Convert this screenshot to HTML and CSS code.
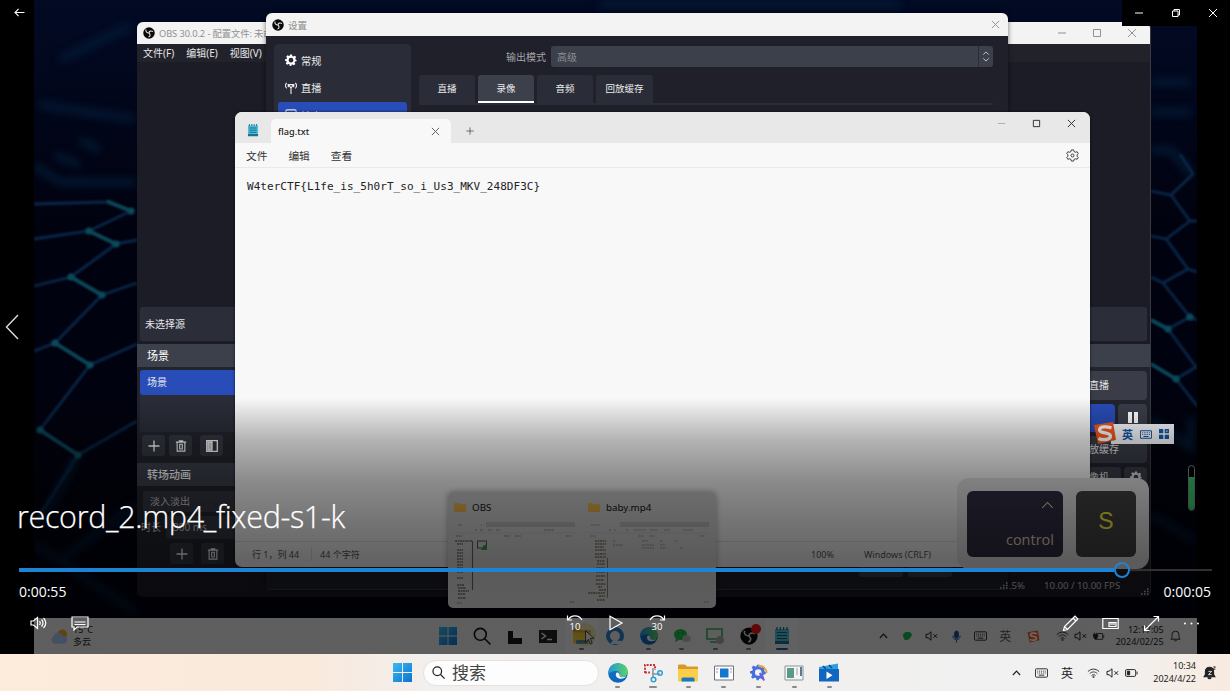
FILE: index.html
```html
<!DOCTYPE html>
<html lang="zh-CN">
<head>
<meta charset="utf-8">
<title>record_2.mp4_fixed-s1-k</title>
<link rel="stylesheet" href="styles.css">
</head>
<body>
<svg class="defs" width="0" height="0">
  <defs>
    <linearGradient id="edgeA" x1="0" y1="0" x2="1" y2="1"><stop offset="0" stop-color="#1273c4"/><stop offset="1" stop-color="#0f5fb8"/></linearGradient>
    <linearGradient id="edgeB" x1="0" y1="0" x2="1" y2="0"><stop offset="0" stop-color="#2296e0"/><stop offset="1" stop-color="#5bd45e"/></linearGradient>
    <linearGradient id="winG" x1="0" y1="0" x2="1" y2="1"><stop offset="0" stop-color="#3fb9ee"/><stop offset="1" stop-color="#0a73d2"/></linearGradient>
    <symbol id="i-x" viewBox="0 0 10 10"><path d="M1 1l8 8M9 1l-8 8"/></symbol>
    <symbol id="i-min" viewBox="0 0 10 10"><path d="M1 5h8"/></symbol>
    <symbol id="i-max" viewBox="0 0 10 10"><path d="M1.500 1.500h7v7h-7z"/></symbol>
    <symbol id="i-restore" viewBox="0 0 10 10"><path d="M1.500 3h5.500v5.500h-5.500zM3 3V1.500h5.500V7H7"/></symbol>
    <symbol id="i-plus" viewBox="0 0 12 12"><path d="M6 0.500v11M0.500 6h11"/></symbol>
    <symbol id="i-trash" viewBox="0 0 14 14"><path d="M1 2.500h12M5 2.500V1h4v1.500M2.500 3v10h9V3M5.500 5v5.500h3V5z"/></symbol>
    <symbol id="i-gear" viewBox="0 0 24 24"><path fill-rule="evenodd" d="M10 1h4l.7 3.200 2 .9 2.900-1.800 2.700 2.900-1.800 2.800.8 2L23 12v2.500l-3 .6-.9 2 1.600 2.900-2.800 2.700-2.800-1.800-2 .8L12.500 24h-3L9 20.700l-2-.9-2.800 1.800-2.700-2.800 1.800-2.800-.8-2L0 13.500v-3l3.300-.7.9-2L2.400 5l2.700-2.700L8 4.100l1.500-.7zM12 7.500a4.800 4.800 0 1 0 0 9.600 4.800 4.800 0 0 0 0-9.600z"/></symbol>
    <symbol id="i-obs" viewBox="0 0 24 24"><circle cx="12" cy="12" r="11.500" fill="#090909"/><g fill="none" stroke="#ddd" stroke-width="2.200"><path d="M6 5c-1 5 2 7 6 7"/><path d="M20 9c-4-2-8-1-8 3"/><path d="M11 20c4-1 4-5 1-8"/></g></symbol>
    <symbol id="i-note" viewBox="0 0 16 18"><path d="M1 2h14v12H1z" fill="#4cc0dd"/><path d="M1 14h14v3H1z" fill="#1e6f93"/><path d="M3 5.500h10M3 8.500h10M3 11.500h10" stroke="#12617e" stroke-width="1.200"/><path d="M3 0v3M6.300 0v3M9.600 0v3M13 0v3" stroke="#175f80" stroke-width="1.200"/></symbol>
    <symbol id="i-win" viewBox="0 0 20 20"><path fill="url(#winG)" d="M0 0h9.500v9.500H0zM10.500 0H20v9.500h-9.500zM0 10.500h9.500V20H0zM10.500 10.500H20V20h-9.500z"/></symbol>
    <symbol id="i-search" viewBox="0 0 16 16"><circle cx="6.500" cy="6.500" r="5.300"/><path d="M10.500 10.500l5 5"/></symbol>
    <symbol id="i-edge" viewBox="0 0 20 20"><circle cx="10" cy="10" r="9.800" fill="url(#edgeA)"/><path d="M.4 9C1 3.500 5 .2 10 .2c6 0 9.800 4 9.800 8.500 0 4-3 5.500-6 5.300-2.500-.2-2.600-1.200-2.200-2 .8-1.800-.8-4-4-4C4.500 8 1.500 9 .4 12z" fill="url(#edgeB)"/><path d="M11.600 12c-.6 1.200.6 2.200 2.800 2.200 1.800 0 3-.4 4-1.200-1 2-3 2.700-5.500 2.700-3.500 0-5.600-2.400-5-5 .5-2 3.600-1.700 3.700 1.300z" fill="#f3f7fa"/></symbol>
    <symbol id="i-folder" viewBox="0 0 20 18"><path d="M0 2c0-1 .5-1.500 1.500-1.500H7l2 2h10c.6 0 1 .4 1 1V6H0z" fill="#d9982a"/><path d="M0 5h20v11.500c0 .6-.4 1-1 1H1c-.6 0-1-.4-1-1z" fill="#fbce4a"/><path d="M3.500 17.500V15c0-1 .8-1.500 1.500-1.500h10c.8 0 1.500.6 1.500 1.500v2.500z" fill="#1678c7"/></symbol>
    <symbol id="i-foldersm" viewBox="0 0 12 10"><path d="M0 1h4.500l1 1.200H12V10H0z" fill="#e9b64a"/></symbol>
    <symbol id="i-up" viewBox="0 0 10 6"><path d="M1 5.200L5 1l4 4.200"/></symbol>
    <symbol id="i-kbd" viewBox="0 0 14 10"><rect x=".5" y=".5" width="13" height="9" rx="1"/><path d="M2.500 3h9M2.500 5h9" stroke-dasharray="1 1"/><path d="M4 7.300h6"/></symbol>
    <symbol id="i-wifi" viewBox="0 0 14 11"><path d="M.8 4C4.500.3 9.500.3 13.200 4M2.800 6.200c2.500-2.500 5.900-2.500 8.400 0M4.800 8.300c1.300-1.300 3.100-1.300 4.400 0"/><circle cx="7" cy="9.800" r=".8"/></symbol>
    <symbol id="i-mute" viewBox="0 0 13 10"><path d="M1 3.300h2L6 .8v8.400L3 6.700H1zM8.500 3.200l3.600 3.600M12.100 3.200L8.500 6.800"/></symbol>
    <symbol id="i-batt" viewBox="0 0 14 9"><rect x=".5" y=".8" width="11" height="7.400" rx="1.500"/><path d="M13 3v3"/><path d="M2.500 2.500h2.500v4H2.500z" fill="currentColor"/></symbol>
    <symbol id="i-bell" viewBox="0 0 12 13"><path d="M1 10h10L9.800 8V5a3.800 3.800 0 0 0-7.600 0v3zM4.500 10.500c.3 1.800 2.700 1.800 3 0"/></symbol>
    <symbol id="i-sogou" viewBox="0 0 24 24"><path d="M1 4l19-3 3 18-18 4z" fill="#f4571f"/><path d="M18.500 7c-5-2-12-1.500-12 2 0 4 11 1.500 11 6 0 4-8 4.500-12 2.500" fill="none" stroke="#fff" stroke-width="3.300"/></symbol>
    <symbol id="i-sig" viewBox="0 0 8 8"><path d="M0 7h1.500M3 7h1.500M3 4.500h1.500M6 7h1.500M6 4.500h1.500M6 2h1.500" stroke-width="1.500"/></symbol>
  </defs>
</svg>

<main class="screen">
  <section class="video">
    <svg class="wallpaper" viewBox="0 0 1163 654">
      <g transform="translate(-34 0)" fill="none">
        <g class="haze"><path d="M34 165l26 17h76M55 155l25 10M80 140l20 10M40 105l95 14M60 60l70-34M1151 82h40M1151 112h40M1151 150h20l20 24M600 5h300"/><path d="M78 455L40 525M34 545l26 15 77-55M60 560l75 52M1151 420l40 28v-30M1151 515l44 26"/></g>
        <g class="net"><path d="M34 204l72-2 25 9-42 20-55 8M89 231l27 13 21-4M116 244l-45 33-37 9M71 277l31 18 35-12M102 295l-47 48-21 8M55 343l35 22 47-21M90 365l-50 65 38 25 59-34M78 455l-43 68"/><path d="M1151 191l20 4 22-21-13-20M1171 195l19 26h7M1190 221l-24 18-15-3M1166 239l22 30 9 3M1188 269l-25 14-12-6M1163 283l27 34 7 3M1190 317l-22 12-17-9M1168 329l28 38-20 12-25-15M1176 379l22 28"/></g>
        <g class="teal"><path d="M107 201l24 10M89 231l27 13M71 277l31 18M55 343l35 22M40 430l38 25M1151 320l17 9M1151 364l25 15"/><g class="dots"><circle cx="131" cy="211" r="2"/><circle cx="89" cy="231" r="2"/><circle cx="116" cy="244" r="2"/><circle cx="71" cy="277" r="2"/><circle cx="102" cy="295" r="2"/><circle cx="55" cy="343" r="2"/><circle cx="90" cy="365" r="2"/><circle cx="40" cy="430" r="2"/><circle cx="78" cy="455" r="2"/><circle cx="1168" cy="329" r="2"/><circle cx="1176" cy="379" r="2"/><circle cx="1190" cy="317" r="2"/></g></g>
      </g>
    </svg>
  </section>

  <section class="obs">
    <header class="obs-title"><svg class="ic12"><use href="#i-obs"/></svg><span>OBS 30.0.2 - 配置文件: 未命</span>
      <div class="winbtns"><svg><use href="#i-min"/></svg><svg><use href="#i-max"/></svg><svg><use href="#i-x"/></svg></div></header>
    <nav class="obs-menu"><span>文件(F)</span><span>编辑(E)</span><span>视图(V)</span></nav>
    <div class="preview"></div>
    <div class="source">未选择源</div>
    <div class="docks">
      <div class="dock-left">
        <h3>场景</h3>
        <div class="list"><div class="row">场景</div></div>
        <div class="tools"><b><svg><use href="#i-plus"/></svg></b><b><svg><use href="#i-trash"/></svg></b><b class="gap"><svg viewBox="0 0 12 12"><path d="M.7.7h10.600v10.600H.7z"/><path d="M2 2h4v8H2z" fill="#ccc"/></svg></b></div>
        <h3 class="h-trans">转场动画</h3>
        <div class="combo">淡入淡出</div>
        <div class="dur"><span>时长</span><i>300 ms</i></div>
        <div class="tools low"><b><svg><use href="#i-plus"/></svg></b><b><svg><use href="#i-trash"/></svg></b></div>
      </div>
      <div class="dock-right">
        <h3></h3>
        <div class="btn b1">直播</div>
        <div class="pair"><div class="btn blue"></div><div class="btn pause"><i></i><i></i></div></div>
        <div class="btn b3">放缓存</div>
        <div class="pair"><div class="btn b4">像机</div><div class="btn sq"><svg><use href="#i-gear"/></svg></div></div>
      </div>
    </div>
    <footer class="obs-status"><span class="fps">10.00 / 10.00 FPS</span><svg class="grip"><use href="#i-sig"/></svg></footer>
  </section>

  <section class="settings">
    <header><svg class="ic12"><use href="#i-obs"/></svg><span>设置</span><svg class="close"><use href="#i-x"/></svg></header>
    <div class="set-body">
      <aside>
        <div><svg class="fill"><use href="#i-gear"/></svg>常规</div>
        <div><svg viewBox="0 0 14 14"><path d="M7 6v8M4 3h6L7 7zM2 1c-1.800 2-1.800 4.500 0 6.500M12 1c1.800 2 1.800 4.500 0 6.500M3.800 2.500v3.500M10.200 2.500v3.500"/></svg>直播</div>
        <div class="sel"><svg viewBox="0 0 14 14"><rect x="1" y="1" width="12" height="10" rx="1.500"/></svg>输出</div>
      </aside>
      <div class="pane">
        <div class="mode"><label>输出模式</label><div class="select"><span>高级</span><svg viewBox="0 0 8 12"><path d="M1 4l3-3 3 3M1 8l3 3 3-3"/></svg></div></div>
        <div class="tabs"><span>直播</span><span class="on">录像</span><span>音频</span><span>回放缓存</span></div>
        <div class="rule"></div>
      </div>
    </div>
    <div class="set-actions"><i></i><i></i></div>
  </section>
  <div class="cpu"><svg><use href="#i-sig"/></svg><span>.5%</span></div>

  <section class="notepad">
    <header><svg class="logo"><use href="#i-note"/></svg><div class="tab"><span>flag.txt</span><svg><use href="#i-x"/></svg></div><svg class="add"><use href="#i-plus"/></svg>
      <div class="winbtns"><svg class="dim"><use href="#i-min"/></svg><svg><use href="#i-max"/></svg><svg><use href="#i-x"/></svg></div></header>
    <nav><span>文件</span><span>编辑</span><span>查看</span><svg viewBox="0 0 14 14"><path d="M5.800 1h2.400l.5 1.900 1.700.6L12 2.900l1.200 2-1.300 1.400v1.400l1.300 1.400-1.200 2-1.600-.6-1.700.6L8.200 13H5.800l-.5-1.900-1.700-.6-1.600.6-1.200-2L2.100 7.700V6.300L.8 4.900l1.200-2 1.600.6 1.700-.6z"/><circle cx="7" cy="7" r="1.600"/></svg></nav>
    <pre>W4terCTF{L1fe_is_5h0rT_so_i_Us3_MKV_248DF3C}</pre>
    <footer><span class="s1">行 1，列 44</span><span class="s2">44 个字符</span><span class="s3">100%</span><span class="s4">Windows (CRLF)</span></footer>
  </section>

  <section class="inner-bar">
    <div class="weather"><svg viewBox="0 0 20 17"><circle cx="14" cy="6" r="5" fill="#f5a623"/><path d="M5 16a4.500 4.500 0 0 1 0-8 5 5 0 0 1 9.500 0 4 4 0 0 1 1 8z" fill="#a9c9f3"/></svg><div>15°C<br>多云</div></div>
    <div class="apps">
      <b><svg><use href="#i-win"/></svg></b>
      <b><svg class="line2"><use href="#i-search"/></svg></b>
      <b><svg viewBox="0 0 18 18"><path d="M7 3h10v10H7z" fill="#eee"/><path d="M2 4h5v7h9v6H2z" fill="#171717"/></svg></b>
      <b><svg viewBox="0 0 18 18"><path d="M0 3h18v13H0z" fill="#222"/><path d="M2.500 6l4 3-4 3M8 12.500h5" fill="none" stroke="#eee" stroke-width="1.500"/></svg></b>
      <b class="lit run"><svg><use href="#i-folder"/></svg></b>
      <b><svg viewBox="0 0 18 18"><circle cx="9" cy="9" r="7" fill="none" stroke="#2f7ec8" stroke-width="4"/><path d="M5 17c0-4 5-6 7-3 3-1 5 0 5 3z" fill="#d9ecff"/></svg></b>
      <b class="run"><svg><use href="#i-edge"/></svg></b>
      <b class="run"><svg viewBox="0 0 18 18"><ellipse cx="7.500" cy="7.500" rx="6.500" ry="5.500" fill="#1fbd4c"/><path d="M3 11l-1 4 4-2z" fill="#1fbd4c"/><ellipse cx="13.500" cy="11.500" rx="4.300" ry="3.600" fill="#bbb"/><path d="M5 6h1M9 6h1" stroke="#084" stroke-width="1.500"/></svg></b>
      <b class="run"><svg viewBox="0 0 18 18"><path d="M1 2h15v10H1zM4 15h7" fill="none" stroke="#2fae5e" stroke-width="1.600"/><circle cx="14" cy="13" r="4" fill="#aaa"/></svg></b>
      <b class="run"><svg><use href="#i-obs"/></svg><i class="rec"></i></b>
      <b class="lit active"><svg><use href="#i-note"/></svg></b>
    </div>
    <div class="tray">
      <svg class="t-up"><use href="#i-up"/></svg>
      <svg viewBox="0 0 12 10"><path d="M1 5a5 4 0 0 1 10-2C9 8 6 9 3 9z" fill="#16b94b" stroke="none"/></svg>
      <svg class="t-mute"><use href="#i-mute"/></svg>
      <svg viewBox="0 0 12 14" class="mic"><rect x="4" y="1" width="4" height="8" rx="2" fill="#174f91"/><path d="M2 6c0 6 8 6 8 0M6 11v2.500"/></svg>
      <svg class="t-kbd"><use href="#i-kbd"/></svg>
      <span class="ying">英</span>
      <svg class="t-so"><use href="#i-sogou"/></svg>
      <span class="net3"><svg><use href="#i-wifi"/></svg><svg><use href="#i-mute"/></svg><svg viewBox="0 0 14 12"><path d="M6 3h6v7H4M13.300 5v3"/><path d="M1 4h5v3L4 10H3L1 7zM2 2v2M5 2v2" fill="currentColor"/></svg></span>
      <div class="clock">12:17:05<br>2024/02/25</div>
      <svg class="t-bell"><use href="#i-bell"/></svg>
    </div>
  </section>

  <section class="thumbs">
    <div class="thumb"><h4><svg><use href="#i-foldersm"/></svg>OBS</h4>
      <svg class="mini" viewBox="0 0 122 82"><path d="M32 0h89v5H32z" fill="#bdbdbd"/><path d="M0 11h122" stroke="#ccc"/><path d="M4 3h4M27 3h1M21 8h2M26 8h3M34 8h4M42 8h4M90 8h10M2 14h6M50 14h6M61 14h6M112 14h5M3 81h5M116 80h5" stroke="#888" stroke-width="1.200" stroke-dasharray="2 .6"/><path d="M1 19h17M3 22h6M3 28h6M3 31h6M3 34h6M3 37h6M3 40h6M3 43h6M3 46h6M3 50h6M3 56h6M3 63h7M4 66h8M4 69h11M4 72h7M4 76h8" stroke="#777" stroke-width="1.300" stroke-dasharray="2 .5"/><path d="M18.500 19v49" stroke="#666" stroke-width="1.100"/><rect x="23.500" y="19" width="9" height="7" fill="#ddd" stroke="#555"/><path d="M30 23h3v5h-6z" fill="#3b9a54"/></svg></div>
    <div class="thumb"><h4><svg><use href="#i-foldersm"/></svg>baby.mp4</h4>
      <svg class="mini" viewBox="0 0 122 82"><path d="M32 0h89v5H32z" fill="#bdbdbd"/><path d="M0 11h122" stroke="#ccc"/><path d="M3 3h9M21 8h2M26 8h3M38 8h3M46 8h12M62 8h8M76 8h6M95 8h10M2 14h6M50 14h6M61 14h6M112 14h5M25 19h3M54 19h6M72 19h3M87 19h3M25 23h10M54 23h12M72 23h5M54 26h12M72 26h6M92 26h3M116 80h5" stroke="#999" stroke-width="1.200" stroke-dasharray="2 .6"/><path d="M7 19h11M7 22h11M7 25h9M7 28h11M7 32h11M7 35h11M9 39h8M9 42h8M8 46h9M8 50h9M8 54h9M8 58h8M8 62h10M10 65h4M11 68h7M0 71h17M11 74h6M9 78h8" stroke="#8a7f68" stroke-width="1.400" stroke-dasharray="2 .5"/><path d="M19.500 36v40" stroke="#888"/></svg></div>
  </section>

  <section class="keys"><div class="key ctrl"><svg><use href="#i-up"/></svg><span>control</span></div><div class="key s">S</div></section>
  <section class="ime"><svg class="so"><use href="#i-sogou"/></svg><div><span>英</span><svg class="k"><use href="#i-kbd"/></svg><svg class="g" viewBox="0 0 10 10"><path d="M0 0h4.300v4.300H0zM0 5.700h4.300V10H0zM5.700 5.700H10V10H5.700z"/><path d="M6.500.8h2.700v2.700H6.500z" fill="none" stroke="#1658a8" stroke-width="1.500"/></svg></div></section>
  <div class="meter"><i></i></div>
  <svg class="cursor" viewBox="0 0 26 26"><circle cx="12" cy="12" r="12" fill="#d8c020" opacity=".3"/><path d="M13 8v12l3-3 2 5 2-1-2-5h4z" fill="#eee" stroke="#222" stroke-width=".8"/></svg>

  <div class="scrim"></div>

  <svg class="back" viewBox="0 0 12 10"><path d="M1 5h10.500M5 1L1 5l4 4"/></svg>
  <div class="appbtns"><svg><use href="#i-min"/></svg><svg><use href="#i-restore"/></svg><svg><use href="#i-x"/></svg></div>
  <svg class="prev" viewBox="0 0 14 26"><path d="M13 1L1.500 13 13 25"/></svg>

  <section class="player">
    <h1>record_2.mp4_fixed-s1-k</h1>
    <div class="seek"><i class="done"></i><i class="knob"></i><i class="rest"></i></div>
    <div class="times"><span>0:00:55</span><span>0:00:05</span></div>
    <div class="ctl">
      <div class="c-left"><svg class="vol" viewBox="0 0 18 14"><path d="M1 5h2.500L7.500 1.500v11L3.500 9H1zM9.500 5q1.500 2 0 4M11.500 3.500q3 3.500 0 7M13.500 2q4.500 5 0 10"/></svg><svg class="cc" viewBox="0 0 18 15"><path d="M1 1h16v10H6l-3 3v-3H1zM3.500 6h11M3.500 8.500h11"/></svg></div>
      <div class="c-mid"><svg viewBox="0 0 18 16"><path d="M2 5c3-5.500 11-5.500 14 0M1.500 .5v4.500H6"/><text x="9" y="14.500">10</text></svg><svg class="play" viewBox="0 0 14 16"><path d="M1 1.200l12 6.800L1 14.800z"/></svg><svg viewBox="0 0 18 16"><path d="M2 5c3-5.500 11-5.500 14 0M16.500 .5v4.500H12"/><text x="9" y="14.500">30</text></svg></div>
      <div class="c-right"><svg viewBox="0 0 17 17"><path d="M1.500 15.500l1-4L13 1.200l2.800 2.800L5.500 14.500zM2.500 11.500l3 3M11 3l3 3"/></svg><svg viewBox="0 0 17 17"><path d="M.8 3.500h15.400v10H.8z"/><path d="M7 7.500h7v4H7z"/><path d="M8 9h5"/></svg><svg viewBox="0 0 17 17"><path d="M1.500 15.500l14-14M10.500 1.500h5v5M1.500 10.500v5h5"/></svg><svg class="dots3" viewBox="0 0 17 17"><circle cx="2" cy="8.500" r="1"/><circle cx="8.500" cy="8.500" r="1"/><circle cx="15" cy="8.500" r="1"/></svg></div>
    </div>
  </section>
</main>

<footer class="taskbar">
  <svg class="start"><use href="#i-win"/></svg>
  <div class="search"><svg><use href="#i-search"/></svg>搜索</div>
  <div class="apps outer">
    <b class="run"><svg><use href="#i-edge"/></svg></b>
    <b class="run wide"><svg viewBox="0 0 20 20"><path d="M2 10V2h10v5M2 9.500h5" fill="none" stroke="#c9343a" stroke-width="2" stroke-dasharray="2 1.200"/><path d="M10 5v9M9 11h8" stroke="#8b949e" stroke-width="1.600"/><circle cx="10.500" cy="16.500" r="2.300" fill="none" stroke="#2d9fd8" stroke-width="1.500"/><circle cx="17" cy="10" r="2.300" fill="none" stroke="#2d9fd8" stroke-width="1.500"/></svg></b>
    <b class="run"><svg><use href="#i-folder"/></svg></b>
    <b class="run"><svg viewBox="0 0 20 20"><path d="M.5 3h19v14H.5z" fill="#fff" stroke="#66727d"/><path d="M6 5.500h8.500v9H6z" fill="#1677cf"/><path d="M2 6h2.500M2 9h2M16 6h2M16 9h2" stroke="#98a"/></svg></b>
    <b class="run"><svg class="cog" viewBox="0 0 24 24"><use href="#i-gear" width="22" height="22" fill="#456fdc"/><path d="M11 3a9 9 0 0 1 11 9" fill="none" stroke="#e8a33a" stroke-width="2.500"/><path d="M13 12l6 10" stroke="#7658e0" stroke-width="2.500"/></svg></b>
    <b class="run"><svg viewBox="0 0 20 20"><path d="M1 3h18v14H1z" fill="#f5f5f5" stroke="#8c9399"/><path d="M3 5h7v10H3z" fill="#5a9a8b"/><path d="M12 5h2v7h-2z" fill="#ccc"/><path d="M16 4h2v9h-2z" fill="#5c7893"/></svg></b>
    <b class="run"><svg viewBox="0 0 20 20"><path d="M0 4l19-3.500V7H0z" fill="#2ba1dc"/><path d="M0 6h20v12.500H0z" fill="#1167c0"/><path d="M4 3l3 3M10 2l3 3" stroke="#0a4f8c" stroke-width="1.500"/><path d="M7.500 8.500l6 3.700-6 3.700z" fill="#fff"/></svg></b>
  </div>
  <div class="systray">
    <svg class="t-up"><use href="#i-up"/></svg><svg class="t-kbd"><use href="#i-kbd"/></svg><span class="ying">英</span>
    <span class="net3"><svg><use href="#i-wifi"/></svg><svg><use href="#i-mute"/></svg><svg><use href="#i-batt"/></svg></span>
    <div class="clock">10:34<br>2024/4/22</div>
    <svg class="t-bell solid" viewBox="0 0 12 13"><path d="M1 10h10L9.800 8V5a3.800 3.800 0 0 0-7.600 0v3zM4.500 10.500c.3 1.800 2.700 1.800 3 0"/><path d="M5 5h3L5 8h3" class="zz"/><path d="M9.500 .8h2L9.500 3h2" fill="none" stroke-width=".8"/></svg>
  </div>
</footer>
</body>
</html>
```

FILE: styles.css
```css
* { box-sizing: border-box; }
body { margin: 0; width: 1230px; height: 691px; overflow: hidden; background: #000; font-family: "Noto Sans", "Noto Sans CJK SC", sans-serif; font-size: 10px; display: flex; flex-direction: column; }
h1, h3, h4, pre { margin: 0; font-weight: 400; }
svg { flex: none; fill: none; stroke: currentColor; }
i { font-style: normal; }
.defs { position: absolute; }
.screen { position: relative; height: 654px; overflow: hidden; background: #000; }
.ic12 { width: 12px; height: 12px; stroke: none; }

.video { margin: 0 33px 0 34px; height: 654px; overflow: hidden; background: linear-gradient(#020a24, #01020f 35%, #01020e); }
.wallpaper { width: 1163px; height: 654px; display: block; stroke: none; }
.net { stroke: #09284a; stroke-width: 2.800; filter: blur(.8px); }
.haze { stroke: #041d3a; stroke-width: 6; filter: blur(4px); }
.teal { stroke: #0b4a58; stroke-width: 3.200; filter: blur(.8px); }
.dots { fill: #0e5c62; }

.obs { position: absolute; left: 137px; top: 22px; width: 1014px; height: 575px; background: #1c1c26; border-radius: 6px; overflow: hidden; display: flex; flex-direction: column; color: #e6e6e8; border-right: 1px solid #3a3a42; }
.obs-title { height: 22px; flex: none; background: #f3f3f3; color: #919191; display: flex; align-items: center; padding-left: 6px; gap: 4px; white-space: nowrap; font-size: 9.300px; }
.obs-title span { letter-spacing: -.1px; }
.winbtns { display: flex; margin-left: auto; gap: 25px; }
.winbtns svg { width: 10px; height: 10px; }
.obs-title .winbtns { padding-right: 13px; }
.obs-menu { height: 18px; flex: none; background: #22222b; display: flex; gap: 12px; padding-left: 6px; align-items: center; font-size: 10px; line-height: 18px; }
.preview { height: 244px; flex: none; }
.source { height: 34px; flex: none; margin: 1px 3px 3px 3px; background: #2b2e38; border-radius: 3px; padding-left: 5px; line-height: 34px; }
.docks { display: flex; justify-content: space-between; height: 228px; flex: none; }
.docks h3 { height: 23px; background: #3c404b; line-height: 23px; font-size: 11px; padding-left: 10px; color: #fff; }
.dock-left { width: 120px; background: #22242d; }
.list { margin: 3px 0 0 3px; height: 62px; background: #2a2d38; }
.row { background: #284cb8; height: 25px; border-radius: 3px; padding-left: 7px; line-height: 24px; }
.tools { display: flex; gap: 4px; padding: 3px 0 0 5px; }
.tools b { width: 23px; height: 21px; background: #343742; border-radius: 3px; display: flex; align-items: center; justify-content: center; color: #fff; }
.tools .gap { margin-left: 4px; }
.tools svg { width: 12px; height: 12px; stroke-width: 1.300; }
.dock-left .h-trans { margin-top: 7px; font-weight: 500; }
.combo { margin: 5px 0 0 6px; height: 21px; background: #343742; border-radius: 3px; padding-left: 7px; line-height: 20px; color: #ccc; }
.dur { display: flex; margin: 4px 0 0 4px; gap: 5px; line-height: 22px; color: #ccc; }
.dur i { background: #343742; flex: 1; border-radius: 3px; padding-left: 7px; height: 23px; }
.tools.low { padding: 4px 0 0 33px; gap: 8px; }
.dock-right { width: 170px; background: #22242d; display: flex; flex-direction: column; gap: 4px; }
.dock-right > :not(h3) { margin-right: 3px; }
.btn { background: #3a3d48; border-radius: 4px; text-align: right; }
.b1 { height: 29px; line-height: 28px; padding-right: 38px; }
.pair { display: flex; gap: 3px; }
.blue { flex: 1; background: #284cb8; height: 28px; }
.pause { width: 29px; display: flex; gap: 2px; justify-content: center; align-items: center; padding-bottom: 2px; }
.pause i { width: 4px; height: 11px; background: #fff; }
.b3 { height: 27px; line-height: 27px; padding-right: 28px; }
.b4 { flex: 1; height: 24px; line-height: 20px; padding-right: 37px; }
.pair .b4 { padding-right: 12px; }
.sq { width: 23px; text-align: center; padding-top: 4px; }
.sq svg { width: 12px; height: 12px; fill: #ddd; stroke: none; }
.obs-status { display: flex; align-items: center; color: #c4c4c4; font-size: 9.600px; padding-left: 907px; height: 20px; margin-top: 3px; }
.obs-status svg { width: 8px; height: 8px; }
.fps { white-space: nowrap; width: 97px; }
.obs-status .grip { margin-top: 12px; }

.settings { position: absolute; left: 266px; top: 13px; width: 742px; height: 577px; background: #1f202a; border-radius: 6px 6px 4px 4px; overflow: hidden; border-bottom: 1px solid #3a3a42; box-shadow: 0 0 5px #0008; color: #ececec; display: flex; flex-direction: column; }
.settings header { height: 23px; background: #f3f3f3; display: flex; align-items: center; padding: 0 8px 0 6px; gap: 4px; color: #8d8d8d; font-size: 9.500px; }
.settings .close { width: 9px; height: 9px; margin-left: auto; }
.set-body { display: flex; padding: 8px 15px 0 8px; gap: 8px; flex: 1; }
.settings aside { width: 137px; background: #2a2d38; padding: 2.500px 4px 0; border-radius: 4px; }
.settings aside div { height: 27.500px; display: flex; align-items: center; gap: 4px; padding-left: 7px; font-size: 10.200px; border-radius: 3px; }
.settings aside svg { width: 12px; height: 12px; stroke-width: 1.300; }
.settings aside .fill { fill: #fff; stroke: none; }
.settings .sel { background: #284cb8; }
.pane { flex: 1; padding-top: 2px; }
.mode { display: flex; align-items: center; gap: 5px; justify-content: flex-end; color: #a5a5aa; }
.select { width: 442px; height: 21px; background: #3c404b; border-radius: 3px; display: flex; align-items: center; justify-content: space-between; padding: 0 0 0 6px; color: #8c8e96; font-size: 10px; }
.select svg { width: 15px; height: 21px; padding: 5px 3px; border-left: 1px solid #2a2d36; color: #ccc; }
.tabs { display: flex; gap: 3px; margin-top: 8px; font-size: 9.500px; }
.tabs span { background: #2a2d38; width: 56px; height: 28px; line-height: 28px; text-align: center; border-radius: 3px 3px 0 0; }
.tabs span:last-child { width: 57px; }
.tabs .on { background: #3c404b; border-bottom: 2px solid #fff; }
.rule { height: 2px; background: #2a2d38; margin-top: 0; }
.set-actions { display: flex; gap: 5px; padding: 0 56px 12px; justify-content: flex-end; }
.set-actions i { width: 44px; height: 24px; background: #3a3d48; border-radius: 3px; }
.cpu { position: absolute; left: 1000px; top: 577px; height: 16px; display: flex; align-items: center; gap: 1px; color: #c4c4c4; font-size: 9.600px; }
.cpu svg { width: 8px; height: 8px; }

.notepad { position: absolute; left: 235px; top: 112px; width: 855px; height: 455px; border-radius: 7px; overflow: hidden; background: #f8f8f8; display: flex; flex-direction: column; box-shadow: 0 0 3px #000a; color: #333; }
.notepad header { height: 31px; background: #e8e8e8; display: flex; align-items: flex-end; }
.notepad .logo { width: 12px; height: 13px; margin: 0 12px 6px 12px; stroke: none; }
.notepad .tab { width: 180px; height: 24px; background: #f8f8f8; border-radius: 5px 5px 0 0; display: flex; align-items: center; justify-content: space-between; padding: 0 11px 0 7px; font-size: 9.200px; font-weight: 500; color: #222; }
.notepad .tab svg { width: 9px; height: 9px; color: #555; }
.notepad .add { width: 8px; height: 8px; margin: 0 0 8px 15px; }
.notepad .winbtns { margin: 0 14px 15px auto; gap: 26px; color: #222; }
.notepad .winbtns svg { width: 9px; height: 9px; }
.notepad .winbtns .dim { color: #aaa; }
.notepad nav { height: 25px; border-bottom: 1px solid #e9e9e9; display: flex; align-items: center; padding: 0 11px; font-size: 10.700px; gap: 21px; }
.notepad nav svg { width: 13px; height: 13px; margin-left: auto; }
.notepad pre { font: 11px/16px "DejaVu Sans Mono", monospace; letter-spacing: .04px; padding: 11px 12px; flex: 1; color: #222; }
.notepad footer { height: 26px; border-top: 1px solid #ddd; display: flex; align-items: center; color: #555; font-size: 9px; padding-left: 17px; white-space: nowrap; }
.s1 { width: 60px; border-right: 1px solid #ddd; }
.s2 { width: 499px; padding-left: 8px; }
.s3 { width: 53px; }

.inner-bar { position: absolute; left: 34px; top: 618px; width: 1163px; height: 36px; background: #ececec; display: flex; align-items: center; color: #222; font-size: 9px; }
.weather { display: flex; align-items: center; gap: 5px; line-height: 12px; width: 397.500px; padding-left: 15px; }
.weather svg { width: 19px; height: 17px; stroke: none; }
.apps { display: flex; height: 100%; }
.apps b { width: 33.400px; display: flex; justify-content: center; align-items: center; position: relative; }
.apps svg { width: 18px; height: 18px; stroke: none; }
.apps .line2 { stroke: #111; stroke-width: 1.400; }
.apps .lit { background: #fff5; border-radius: 4px; }
.apps .run::after, .apps .active::after { content: ""; position: absolute; bottom: 4px; width: 5px; height: 2px; background: #777; border-radius: 1px; }
.apps .active::after { width: 12px; background: #155fb9; }
.rec { position: absolute; right: 4px; top: 6px; width: 10px; height: 10px; border-radius: 5px; background: #f01515; }
.tray { margin-left: 80px; display: flex; align-items: center; }
.tray > * { margin-right: 12.300px; }
.t-up { width: 9px; height: 6px; stroke-width: 1.300; }
.tray > svg:nth-child(2) { width: 11px; height: 9px; margin-left: 2px; }
.t-mute { width: 13px; height: 10px; }
.mic { width: 11px; height: 13px; color: #174f91; }
.t-kbd { width: 13px; height: 10px; }
.ying { font-size: 12px; }
.tray .ying { color: #555; }
.tray .t-so { width: 13px; height: 13px; margin: 0 16px 0 3px; stroke: none; }
.net3 { display: flex; gap: 5px; }
.net3 svg { width: 13px; height: 10px; }
.tray .net3 { margin-right: 7px; }
.clock { text-align: right; line-height: 12.500px; font-size: 9px; }
.tray .clock { width: 52px; margin-right: 6px; }
.t-bell { width: 11px; height: 12px; }

.thumbs { position: absolute; left: 448px; top: 492px; width: 268px; height: 116px; background: linear-gradient(#cacaca, #dedede 50%, #e8e8e8); border-radius: 5px; box-shadow: 0 0 6px #0005; display: flex; gap: 12px; padding: 8px 6px; color: #111; }
.thumb { width: 122px; }
.thumb h4 { display: flex; gap: 6px; align-items: center; height: 14px; font-size: 9.800px; }
.thumb h4 svg { width: 12px; height: 10px; stroke: none; }
.mini { width: 122px; height: 82px; margin-top: 8px; stroke: none; display: block; }

.keys { position: absolute; left: 957px; top: 478px; width: 192px; height: 91px; border-radius: 12px; background: #e4e4e4; display: flex; gap: 13px; padding: 13px 13px 12px 10px; }
.key { border-radius: 6px; background: #424242; }
.ctrl { width: 96px; background: #312d42; color: #e0d5bd; display: flex; flex-direction: column; align-items: flex-end; justify-content: space-between; padding: 10px 9px 8px; font: 14.500px/18px "Open Sans", sans-serif; }
.ctrl svg { width: 13px; height: 8px; stroke-width: .8; }
.key.s { width: 60px; color: #f4f03c; display: flex; align-items: center; justify-content: center; padding-bottom: 5px; font: 23px "Liberation Sans", sans-serif; }
.ime { position: absolute; left: 1093px; top: 421px; width: 81px; height: 24px; }
.ime div { margin: 3px 0 0 18px; height: 20px; background: #f9fbff; display: flex; align-items: center; padding: 0 5px 0 11px; justify-content: space-between; color: #1658a8; font-weight: 700; font-size: 11px; }
.ime .so { position: absolute; left: 0; top: 0; width: 24px; height: 24px; stroke: none; }
.ime .k { width: 12px; height: 9px; stroke-width: 1.200; }
.ime .g { width: 10px; height: 10px; fill: #1658a8; stroke: none; }
.meter { position: absolute; left: 1188px; top: 465px; width: 7px; height: 46px; border: 1px solid #888; border-radius: 4px; display: flex; align-items: flex-end; overflow: hidden; background: #000; }
.meter i { width: 100%; height: 33px; background: #32cd69; }
.cursor { position: absolute; left: 573px; top: 623px; width: 25px; height: 25px; stroke: none; }

.scrim { position: absolute; inset: 0; background: linear-gradient(transparent 398px, rgba(0,0,0,.15) 420px, rgba(0,0,0,.28) 440px, rgba(0,0,0,.44) 480px, rgba(0,0,0,.53) 520px, rgba(0,0,0,.6) 560px); }
.back { position: absolute; left: 14px; top: 8px; width: 11px; height: 9px; color: #fff; stroke-width: 1.200; }
.appbtns { position: absolute; right: 0; top: 0; width: 108px; height: 26px; background: #000; color: #fff; display: flex; align-items: center; gap: 27px; padding-left: 12px; }
.appbtns svg { width: 10px; height: 10px; }
.prev { position: absolute; left: 5px; top: 314px; width: 14px; height: 26px; color: #ddd; stroke-width: 1.400; }

.player { position: absolute; left: 0; bottom: 0; width: 1230px; height: 160px; color: #fff; padding: 0 18px; }
.player h1 { font: 300 30.500px/44px "Open Sans", "Noto Sans", sans-serif; height: 71px; white-space: nowrap; letter-spacing: -.33px; margin-left: -1px; -webkit-text-stroke: .25px #fff; }
.seek { display: flex; align-items: center; height: 10px; padding-left: 1px; }
.done { width: 1095px; height: 4px; background: #1f83d3; }
.knob { width: 16px; height: 16px; border: 2px solid #1f83d3; border-radius: 8px; flex: none; }
.rest { flex: 1; height: 2px; background: #303030; }
.times { display: flex; justify-content: space-between; padding: 0 1px; font: 14px/20px "Open Sans", sans-serif; margin-top: 7px; }
.ctl { display: grid; grid-template-columns: 1fr auto 1fr; align-items: center; margin-top: 11px; height: 20px; }
.ctl svg { stroke-width: 1.200; }
.c-left { display: flex; padding-left: 12px; gap: 23px; align-items: center; }
.vol { width: 18px; height: 14px; }
.cc { width: 18px; height: 15px; }
.c-mid { display: flex; gap: 24px; align-items: center; padding-left: 2px; }
.c-mid svg { width: 18px; height: 16px; overflow: visible; }
.c-mid .play { width: 14px; height: 16px; margin: 0 1px; }
.c-mid text { font: 9.500px "Open Sans", sans-serif; fill: #fff; stroke: none; text-anchor: middle; }
.c-right { display: flex; gap: 23.500px; justify-content: flex-end; padding-right: 12px; }
.c-right svg { width: 17px; height: 17px; }
.c-right .dots3 { fill: #fff; stroke: none; }

.taskbar { height: 37px; display: flex; align-items: center; background: linear-gradient(90deg, #fdecdc, #faeadc 25%, #f2efed 35%, #f1f1f1 90%, #f8ebe0); color: #222; padding-left: 393px; }
.start { width: 19px; height: 19px; stroke: none; }
.search { width: 176px; height: 26px; margin-left: 11px; border-radius: 13px; background: #fdfdfd; border: 1px solid #e4e2e0; display: flex; align-items: center; gap: 7px; padding-left: 8px; font-size: 17px; line-height: 24px; color: #444; }
.search svg { width: 13px; height: 13px; stroke: #222; stroke-width: 1.500; }
.outer { padding-left: 1px; }
.outer b { width: 35.300px; }
.outer svg { width: 20px; height: 20px; }
.outer .cog { width: 18px; height: 18px; }
.outer .run::after { bottom: 3px; background: #8a8a8a; }
.outer .wide::after { width: 8px; }
.systray { margin-left: auto; display: flex; align-items: center; padding-right: 14px; }
.systray .t-kbd { margin: 0 13px 0 14px; }
.systray .net3 { margin: 0 13px 0 14px; gap: 6px; }
.systray .clock { width: 45px; margin-right: 7px; white-space: nowrap; }
.systray .t-bell { width: 13px; height: 14px; }
.solid { fill: #222; }
.solid .zz { fill: none; stroke: #eee; stroke-width: .8; }
```
